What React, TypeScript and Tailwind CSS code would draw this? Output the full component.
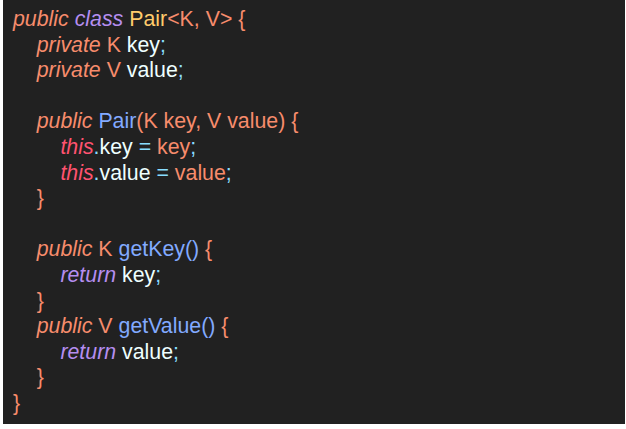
import React from "react";

type Tok = [string, string, boolean?];

// colours taken from the screenshot (material-ish palette)
const kw = "text-[#f78c6c]";
const purple = "text-[#b58ef0]";
const yellow = "text-[#ffcb6b]";
const blue = "text-[#82aaff]";
const red = "text-[#ff5370]";
const cyan = "text-[#89ddff]";
const fg = "text-[#eeffff]";
const orange = "text-[#f78c6c]";

const lines: Tok[][] = [
  [["public", kw, true], [" "], ["class", purple, true], [" "], ["Pair", yellow], ["<K, V> {", orange]],
  [["    "], ["private", kw, true], [" K ", orange], ["key", fg], [";", cyan]],
  [["    "], ["private", kw, true], [" V ", orange], ["value", fg], [";", cyan]],
  [],
  [["    "], ["public", kw, true], [" "], ["Pair", blue], ["(K key, V value) {", orange]],
  [["        "], ["this", red, true], [".", cyan], ["key", fg], [" = ", cyan], ["key", orange], [";", cyan]],
  [["        "], ["this", red, true], [".", cyan], ["value", fg], [" = ", cyan], ["value", orange], [";", cyan]],
  [["    "], ["}", orange]],
  [],
  [["    "], ["public", kw, true], [" K ", orange], ["getKey", blue], ["() ", blue], ["{", orange]],
  [["        "], ["return", purple, true], [" "], ["key", fg], [";", cyan]],
  [["    "], ["}", orange]],
  [["    "], ["public", kw, true], [" V ", orange], ["getValue", blue], ["() ", blue], ["{", orange]],
  [["        "], ["return", purple, true], [" "], ["value", fg], [";", cyan]],
  [["    "], ["}", orange]],
  [["}", orange]],
];

export default function App() {
  return (
    <div className="w-[626px] h-[429px] bg-white">
      <div className="ml-[3px] w-[622px] h-[424px] bg-[#212121] pl-[10px] pt-[7px]">
        <pre className="font-['Liberation_Sans',Arial,sans-serif] text-[21.33px] leading-[25.6px] whitespace-pre">
          {lines.map((line, i) => (
            <div key={i} className="h-[25.6px]">
              {line.map(([t, c, it], j) => (
                <span key={j} className={`${c ?? ""} ${it ? "italic" : ""}`}>
                  {t}
                </span>
              ))}
            </div>
          ))}
        </pre>
      </div>
    </div>
  );
}
